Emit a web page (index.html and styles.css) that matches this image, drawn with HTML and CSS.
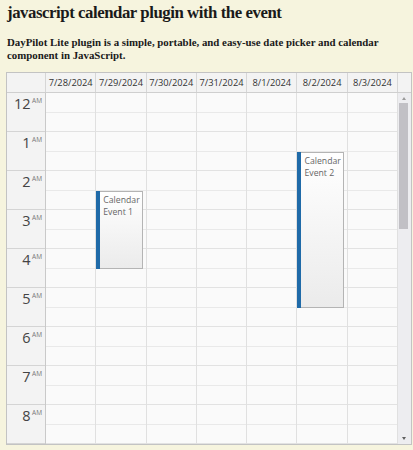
FILE: index.html
```html
<!DOCTYPE html>
<html>
<head>
<meta charset="utf-8">
<link rel="stylesheet" href="styles.css">
</head>
<body>
<h1 class="title">javascript calendar plugin with the event</h1>
<p class="intro">DayPilot Lite plugin is a simple, portable, and easy-use date picker and calendar component in JavaScript.</p>
<div class="cal">
  <div class="cal-head">
    <div class="corner"></div>
    <div class="day-h">7/28/2024</div>
    <div class="day-h">7/29/2024</div>
    <div class="day-h">7/30/2024</div>
    <div class="day-h">7/31/2024</div>
    <div class="day-h">8/1/2024</div>
    <div class="day-h">8/2/2024</div>
    <div class="day-h">8/3/2024</div>
    <div class="head-fill"></div>
  </div>
  <div class="cal-body">
    <div class="hours">
      <div class="hour"><span class="h">12</span><span class="ampm">AM</span></div>
      <div class="hour"><span class="h">1</span><span class="ampm">AM</span></div>
      <div class="hour"><span class="h">2</span><span class="ampm">AM</span></div>
      <div class="hour"><span class="h">3</span><span class="ampm">AM</span></div>
      <div class="hour"><span class="h">4</span><span class="ampm">AM</span></div>
      <div class="hour"><span class="h">5</span><span class="ampm">AM</span></div>
      <div class="hour"><span class="h">6</span><span class="ampm">AM</span></div>
      <div class="hour"><span class="h">7</span><span class="ampm">AM</span></div>
      <div class="hour"><span class="h">8</span><span class="ampm">AM</span></div>
    </div>
    <div class="days">
      <div class="day"></div>
      <div class="day">
        <div class="event" style="top:97.5px;height:76px"><div class="bar"></div><div class="ev-text">Calendar Event 1</div></div>
      </div>
      <div class="day"></div>
      <div class="day"></div>
      <div class="day"></div>
      <div class="day">
        <div class="event" style="top:58.5px;height:154px"><div class="bar"></div><div class="ev-text">Calendar Event 2</div></div>
      </div>
      <div class="day"></div>
    </div>
    <div class="scroll">
      <div class="arrow up"></div>
      <div class="track"><div class="thumb"></div></div>
      <div class="arrow down"></div>
    </div>
  </div>
</div>
</body>
</html>
```
FILE: styles.css
```css
html, body {
  margin: 0;
  padding: 0;
  background: #f6f4de;
}
body {
  padding: 0 0 0 6px;
  font-family: "Liberation Serif", "Times New Roman", serif;
  color: #1a1a1a;
}
.title {
  font-size: 16.8px;
  letter-spacing: -0.45px;
  font-weight: bold;
  margin: 0;
  padding-top: 2px;
  line-height: 22px;
  padding-left: 1px;
}
.intro {
  font-size: 10.85px;
  font-weight: bold;
  line-height: 13px;
  margin: 12px 0 0 1px;
  width: 380px;
}
.cal {
  margin-top: 10px;
  width: 404px;
  border: 1px solid #c3c3c3;
  background: #fafafa;
  font-family: "Open Sans", "Noto Sans", sans-serif;
}
.cal-head {
  display: flex;
  height: 19px;
  border-bottom: 1px solid #cfcfcf;
  background: #f3f3f3;
}
.corner {
  width: 39px;
  flex: none;
  box-sizing: border-box;
  border-right: 1px solid #d6d6d6;
}
.day-h {
  width: 50.3px;
  flex: none;
  box-sizing: border-box;
  border-right: 1px solid #d6d6d6;
  font-size: 9.3px;
  color: #333;
  text-align: center;
  line-height: 19px;
}
.head-fill {
  flex: 1;
}
.cal-body {
  display: flex;
  height: 351px;
  overflow: hidden;
}
.hours {
  width: 39px;
  box-sizing: border-box;
  border-right: 1px solid #c9c9c9;
  background: #f3f3f3;
  flex: none;
}
.hour {
  height: 38px;
  border-bottom: 1px solid #d4d4d4;
  display: flex;
  justify-content: flex-end;
  align-items: flex-start;
  padding-right: 3px;
  color: #444;
}
.h {
  font-size: 14.5px;
  line-height: 20px;
  margin-top: 1px;
}
.ampm {
  font-size: 6.5px;
  line-height: 8px;
  margin-top: 4px;
  margin-left: 1.5px;
  color: #777;
}
.days {
  display: flex;
  flex: none;
}
.day {
  position: relative;
  width: 50.3px;
  box-sizing: border-box;
  border-right: 1px solid #e0e0e0;
  background-image:
    linear-gradient(to bottom, transparent 0, transparent 19px, #e9e9e9 19px, #e9e9e9 20px, transparent 20px, transparent 38px, #e2e2e2 38px, #e2e2e2 39px);
  background-size: 100% 39px;
  background-repeat: repeat-y;
}
.event {
  position: absolute;
  left: 0;
  width: 45px;
  border: 1px solid #b4b4b4;
  background: linear-gradient(to bottom, #ffffff, #ebebeb);
  display: flex;
  box-sizing: content-box;
}
.bar {
  width: 4px;
  background: #1f6aa8;
  flex: none;
  margin: -1px 0 -1px -1px;
}
.ev-text {
  font-size: 8.7px;
  line-height: 12px;
  color: #666;
  padding: 2px 2px 0 3px;
}
.scroll {
  flex: 1;
  background: #ededf0;
  display: flex;
  flex-direction: column;
  padding-right: 2px;
}
.arrow {
  height: 10px;
  position: relative;
}
.arrow.up::after, .arrow.down::after {
  content: "";
  position: absolute;
  left: 3.5px;
  border-left: 2.5px solid transparent;
  border-right: 2.5px solid transparent;
}
.arrow.up::after {
  top: 4px;
  border-bottom: 3px solid #9a9a9a;
}
.arrow.down::after {
  top: 3px;
  border-top: 3px solid #606060;
}
.track {
  flex: 1;
  padding: 0 1px 0 1px;
}
.thumb {
  height: 126px;
  background: #c1c0c5;
}
```
